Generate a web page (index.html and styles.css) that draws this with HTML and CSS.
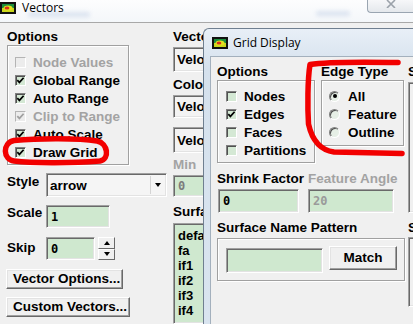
FILE: index.html
```html
<!DOCTYPE html>
<html>
<head>
<meta charset="utf-8">
<link rel="stylesheet" href="styles.css">
</head>
<body>
<div class="vwin">
  <div class="titlebar">
    <svg class="appicon" width="16" height="12" viewBox="0 0 16 12"><rect width="16" height="12" fill="#111"/><rect x="2" y="2" width="12" height="8" fill="#1c8f3c"/><rect x="2" y="6" width="12" height="4" fill="#c9d61c"/><ellipse cx="8" cy="6" rx="4.5" ry="2.6" fill="#e4e020"/><ellipse cx="7" cy="6" rx="2.4" ry="1.5" fill="#d8301a"/></svg>
    <span class="ttext">Vectors</span>
    <span class="smudge s1"></span>
    <span class="smudge s2"></span>
    <div class="closebtn"><svg width="12" height="8" viewBox="0 0 12 8"><path d="M2 0 L10 8 M10 0 L2 8"/></svg></div>
  </div>
  <div class="vbody">
    <div class="vleft">
      <div class="lbl">Options</div>
      <div class="group opts">
        <div class="ck dis"><span class="cb"></span>Node Values</div>
        <div class="ck"><span class="cb"><svg viewBox="0 0 9 9"><path d="M1.3 4.2 L3.4 6.4 L7.6 1.8"/></svg></span>Global Range</div>
        <div class="ck"><span class="cb"><svg viewBox="0 0 9 9"><path d="M1.3 4.2 L3.4 6.4 L7.6 1.8"/></svg></span>Auto Range</div>
        <div class="ck dis"><span class="cb"><svg viewBox="0 0 9 9"><path d="M1.3 4.2 L3.4 6.4 L7.6 1.8"/></svg></span>Clip to Range</div>
        <div class="ck"><span class="cb"><svg viewBox="0 0 9 9"><path d="M1.3 4.2 L3.4 6.4 L7.6 1.8"/></svg></span>Auto Scale</div>
        <div class="ck"><span class="cb"><svg viewBox="0 0 9 9"><path d="M1.3 4.2 L3.4 6.4 L7.6 1.8"/></svg></span>Draw Grid</div>
      </div>
      <div class="frow r-style"><span class="flbl">Style</span><div class="combo">arrow<span class="carr"></span></div></div>
      <div class="frow r-scale"><span class="flbl">Scale</span><div class="entry e-scale">1</div></div>
      <div class="frow r-skip"><span class="flbl">Skip</span><div class="entry e-skip">0</div><div class="spin"><span class="sp up"></span><span class="sp dn"></span></div></div>
      <button class="btn b-vo">Vector Options...</button>
      <button class="btn b-cv">Custom Vectors...</button>
    </div>
    <div class="vright">
      <div class="lbl">Vectors of</div>
      <div class="menu m1">Velocity</div>
      <div class="lbl l-colo">Color by</div>
      <div class="menu m2">Velocity...</div>
      <div class="menu m3">Velocity Magnitude</div>
      <div class="lbl dis l-min">Min</div>
      <div class="entry e-min">0</div>
      <div class="lbl l-surf">Surfaces</div>
      <div class="list vlist">
        <div>default-interior</div>
        <div>fa</div>
        <div>if1</div>
        <div>if2</div>
        <div>if3</div>
        <div>if4</div>
      </div>
    </div>
  </div>
</div>

<div class="gwin">
  <div class="gtitle">
    <svg class="appicon" width="16" height="12" viewBox="0 0 16 12"><rect width="16" height="12" fill="#111"/><rect x="2" y="2" width="12" height="8" fill="#1c8f3c"/><rect x="2" y="6" width="12" height="4" fill="#c9d61c"/><ellipse cx="8" cy="6" rx="4.5" ry="2.6" fill="#e4e020"/><ellipse cx="7" cy="6" rx="2.4" ry="1.5" fill="#d8301a"/></svg>
    <span class="ttext">Grid Display</span>
  </div>
  <div class="gclient">
    <div class="gmain">
      <div class="gtop">
        <div class="gcol1">
          <div class="lbl">Options</div>
          <div class="group gopts">
            <div class="ck"><span class="cb"></span>Nodes</div>
            <div class="ck"><span class="cb"><svg viewBox="0 0 9 9"><path d="M1.3 4.2 L3.4 6.4 L7.6 1.8"/></svg></span>Edges</div>
            <div class="ck"><span class="cb"></span>Faces</div>
            <div class="ck"><span class="cb"></span>Partitions</div>
          </div>
        </div>
        <div class="gcol2">
          <div class="lbl">Edge Type</div>
          <div class="group gedge">
            <div class="ck"><span class="rb on"></span>All</div>
            <div class="ck"><span class="rb"></span>Feature</div>
            <div class="ck"><span class="rb"></span>Outline</div>
          </div>
        </div>
      </div>
      <div class="gpair">
        <div class="gp1">
          <div class="lbl">Shrink Factor</div>
          <div class="entry e-shrink">0</div>
        </div>
        <div class="gp2">
          <div class="lbl dis">Feature Angle</div>
          <div class="entry e-angle dis">20</div>
        </div>
      </div>
      <div class="lbl l-snp">Surface Name Pattern</div>
      <div class="group snp">
        <div class="entry e-pat"></div>
        <button class="btn b-match">Match</button>
      </div>
    </div>
    <div class="gside">
      <div class="lbl">S</div>
      <div class="list sbox1"></div>
      <div class="lbl l-st">S</div>
      <div class="list sbox2"></div>
    </div>
  </div>
</div>

<svg class="marks" width="413" height="324" viewBox="0 0 413 324">
  <path d="M14 140.5 C40 138 78 138 97 141 C108 143 110 159 100 161 C70 163.5 30 163 14 161 C3 159.5 2 143 14 140.5 Z"/>
  <path d="M398 62.5 C370 62 325 62 310 64.5 C307.5 80 307.5 108 308.5 124 C312 140 320 150 334 152 L402 153.5"/>
</svg>
</body>
</html>
```
FILE: styles.css
```css
* { box-sizing: border-box; }
html, body { margin: 0; padding: 0; }
body {
  width: 413px;
  height: 324px;
  overflow: hidden;
  position: relative;
  background: #f0f0f0;
  font-family: "Liberation Sans", Arial, sans-serif;
  font-weight: bold;
  font-size: 13.5px;
  color: #000;
}

/* ---------- shared widgets ---------- */
.lbl { height: 16px; line-height: 16px; white-space: nowrap; }
.dis { color: #a3a3a3; }

.group {
  border: 1px solid #a0a0a0;
  box-shadow: inset 1px 1px 0 #fff, 1px 1px 0 #fff;
}

.ck {
  height: 18px;
  display: flex;
  align-items: center;
  white-space: nowrap;
}
.cb {
  flex: none;
  width: 11px;
  height: 11px;
  margin-right: 7px;
  border: 1px solid;
  border-color: #808080 #fff #fff #808080;
  box-shadow: inset 1px 1px 0 #505050;
  background: #d4e8d4;
  display: flex;
}
.cb svg { width: 9px; height: 9px; }
.cb path { fill: none; stroke: #000; stroke-width: 1.7; }
.ck.dis .cb { background: #ececec; border-color: #b4b4b4 #fff #fff #b4b4b4; box-shadow: none; }
.ck.dis .cb path { stroke: #a0a0a0; }

.rb {
  flex: none;
  width: 11px;
  height: 11px;
  margin-right: 8px;
  border-radius: 50%;
  border: 1px solid;
  border-color: #808080 #fff #fff #808080;
  box-shadow: inset 1px 1px 0 #505050;
  background: #e6efe6;
  display: flex;
  align-items: center;
  justify-content: center;
}
.rb.on::after {
  content: "";
  width: 4px;
  height: 4px;
  border-radius: 50%;
  background: #000;
}

.entry, .combo, .menu, .list {
  border: 1px solid;
  border-color: #a0a0a0 #fff #fff #a0a0a0;
  box-shadow: inset 1px 1px 0 #696969, inset -1px -1px 0 #e3e3e3;
}
.entry {
  background: #cfe8cf;
  font-family: "DejaVu Sans Mono", "Liberation Mono", monospace;
  font-weight: bold;
  font-size: 12px;
  display: flex;
  align-items: center;
  padding-left: 4px;
}
.entry.dis { color: #9a9a9a; }

.btn {
  display: block;
  margin: 0;
  font: inherit;
  color: #000;
  text-align: left;
  white-space: nowrap;
  background: #f0f0f0;
  border: 1px solid;
  border-color: #fff #696969 #696969 #fff;
  box-shadow: inset -1px -1px 0 #a0a0a0, inset 1px 1px 0 #e3e3e3;
  padding: 0 0 0 6px;
  line-height: 16px;
}

.list { background: #cfe8cf; }

/* ---------- Vectors window ---------- */
.vwin { width: 413px; height: 324px; overflow: hidden; }
.titlebar {
  position: relative;
  height: 23px;
  border-bottom: 1px solid #a8a8a8;
  background: linear-gradient(#fdfdfe, #f4f7fa);
  display: flex;
  align-items: flex-start;
}
.appicon { flex: none; margin-top: 2px; }
.ttext {
  font-family: "Open Sans", "Noto Sans", sans-serif;
  font-weight: normal;
  font-size: 12px;
  line-height: 16px;
  margin-left: 6px;
  color: #000;
}
.smudge {
  position: absolute;
  height: 5px;
  border-radius: 3px;
  background: rgba(120, 150, 200, 0.22);
  filter: blur(2px);
}
.s1 { left: 28px; top: 12px; width: 62px; }
.s2 { left: 316px; top: 11px; width: 34px; }
.closebtn {
  margin-left: auto;
  width: 46px;
  height: 13px;
  border: 1px solid #9aa5b1;
  border-top: 0;
  border-right: 0;
  border-radius: 0 0 0 4px;
  background: linear-gradient(#f6f7f9, #e4e8ec);
  display: flex;
  justify-content: center;
  align-items: flex-start;
}
.closebtn path { stroke: #9ba2aa; stroke-width: 1.6; fill: none; }

.vbody { display: flex; padding: 6px 0 0 6px; }
.vleft { width: 161px; flex: none; }
.vleft > .lbl { padding-left: 1px; }
.opts { width: 122px; margin-left: 1px; padding: 7px 0 3px 7px; }

.frow { display: flex; align-items: flex-start; }
.flbl { width: 40px; flex: none; padding: 1px 0 0 1px; line-height: 16px; }
.r-style { margin-top: 8px; }
.r-scale { margin-top: 8px; }
.r-scale .flbl { padding-top: 0; }
.r-skip { margin-top: 9px; }
.r-skip .flbl { padding-top: 3px; }

.combo {
  width: 121px;
  height: 24px;
  background: #f5f5f5;
  display: flex;
  align-items: center;
  padding-left: 3px;
}
.carr {
  margin-left: auto;
  margin-right: 2px;
  width: 14px;
  height: 18px;
  border-left: 1px solid #d4d4d4;
  display: flex;
  align-items: center;
  justify-content: center;
}
.carr::before {
  content: "";
  border-left: 3.5px solid transparent;
  border-right: 3.5px solid transparent;
  border-top: 4px solid #000;
}
.e-scale { width: 64px; height: 23px; }
.e-skip { width: 49px; height: 23px; }
.spin {
  margin-left: 3px;
  width: 17px;
  height: 23px;
  display: flex;
  flex-direction: column;
}
.sp {
  flex: 1;
  border: 1px solid;
  border-color: #fff #696969 #696969 #fff;
  background: #f0f0f0;
  display: flex;
  align-items: center;
  justify-content: center;
}
.sp.up::before {
  content: "";
  border-left: 3.5px solid transparent;
  border-right: 3.5px solid transparent;
  border-bottom: 4px solid #000;
}
.sp.dn::before {
  content: "";
  border-left: 3.5px solid transparent;
  border-right: 3.5px solid transparent;
  border-top: 4px solid #000;
}
.b-vo { width: 117px; height: 20px; margin-top: 9px; }
.b-cv { width: 124px; height: 20px; margin-top: 8px; }

.vright { margin-left: 6px; width: 200px; flex: none; }
.menu {
  background: #f3f3f3;
  display: flex;
  align-items: center;
  padding-left: 3px;
  white-space: nowrap;
}
.m1 { margin-top: 2px; height: 25px; }
.l-colo { margin-top: 5px; }
.m2 { margin-top: 2px; height: 23px; }
.m3 { margin-top: 9px; height: 26px; }
.l-min { margin-top: 4px; }
.e-min { margin-top: 2px; height: 22px; width: 60px; color: #7c7c7c; }
.l-surf { margin-top: 7px; }
.vlist {
  margin-top: 3px;
  height: 101px;
  padding: 4px 0 0 4px;
  font-size: 13px;
  line-height: 15px;
  overflow: hidden;
}

/* ---------- Grid Display window ---------- */
.gwin {
  position: absolute;
  left: 203px;
  top: 28px;
  width: 210px;
  height: 296px;
  overflow: hidden;
  border: 1px solid #6f7f90;
  border-right: 0;
  border-bottom: 0;
  border-radius: 6px 0 0 0;
  background: linear-gradient(#e8eff7, #d5e1ed 40px, #d9e4ef);
  padding: 0 0 0 6px;
}
.gtitle {
  height: 27px;
  display: flex;
  align-items: flex-start;
  padding: 8px 0 0 2px;
}
.gtitle .appicon { margin-top: 0; }
.gtitle .ttext { margin-left: 5px; margin-top: -2px; }
.gclient {
  width: 220px;
  height: 275px;
  border: 1px solid #a3b0bd;
  background: #f0f0f0;
  padding: 7px 0 0 6px;
  display: flex;
  gap: 3px;
}
.gmain { width: 188px; flex: none; }
.gtop { display: flex; gap: 6px; }
.gcol1 { width: 98px; }
.gcol2 { width: 83px; }
.gopts { padding: 6px 0 3px 8px; }
.gedge { padding: 6px 0 4px 7px; }

.gpair { display: flex; margin-top: 8px; }
.gp1 { width: 91px; flex: none; }
.e-shrink { margin: 2px 0 0 1px; width: 81px; height: 24px; }
.e-angle { margin-top: 2px; width: 86px; height: 24px; }
.l-snp { margin-top: 7px; }
.snp {
  margin-top: 2px;
  display: flex;
  align-items: flex-start;
  padding: 7px 6px 7px 8px;
}
.e-pat { margin-top: 2px; width: 97px; height: 25px; }
.b-match { margin-left: 6px; width: 68px; height: 24px; text-align: center; padding: 0; }

.gside { flex: none; width: 20px; }
.sbox1 { margin-top: 2px; height: 131px; background: #f0f0f0; }
.l-st { margin-top: 7px; }
.sbox2 { margin-top: 1px; height: 70px; background: #f0f0f0; }

/* ---------- red hand-drawn marks ---------- */
.marks {
  position: absolute;
  left: 0;
  top: 0;
  pointer-events: none;
}
.marks path {
  fill: none;
  stroke: #f20000;
  stroke-width: 5.5;
  stroke-linecap: round;
  stroke-linejoin: round;
}
```
